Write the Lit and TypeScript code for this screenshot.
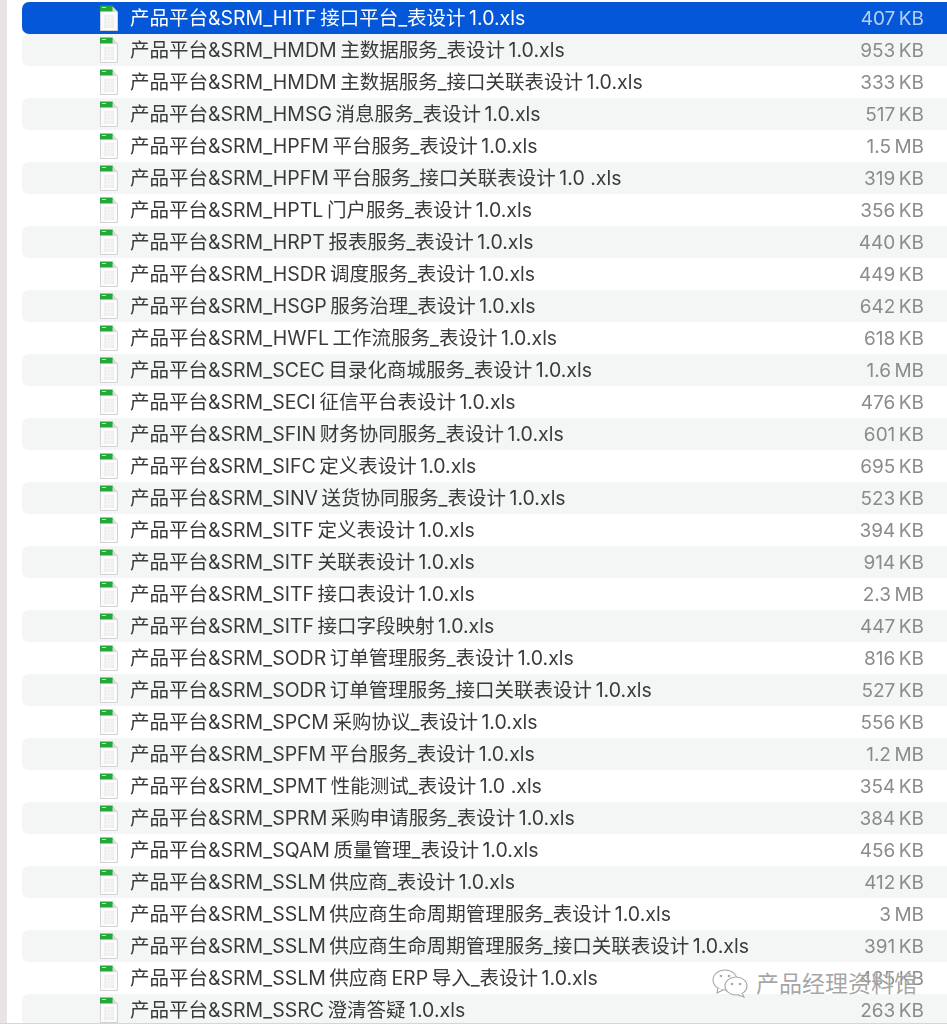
import { LitElement, html, css } from "lit";
import { customElement } from "lit/decorators.js";

const P = "产品平台&SRM_";
const rows: [string, string][] = [
  ["HITF 接口平台_表设计1.0.xls", "407 KB"],
  ["HMDM 主数据服务_表设计1.0.xls", "953 KB"],
  ["HMDM 主数据服务_接口关联表设计1.0.xls", "333 KB"],
  ["HMSG 消息服务_表设计1.0.xls", "517 KB"],
  ["HPFM 平台服务_表设计1.0.xls", "1.5 MB"],
  ["HPFM 平台服务_接口关联表设计1.0 .xls", "319 KB"],
  ["HPTL 门户服务_表设计1.0.xls", "356 KB"],
  ["HRPT 报表服务_表设计1.0.xls", "440 KB"],
  ["HSDR 调度服务_表设计1.0.xls", "449 KB"],
  ["HSGP 服务治理_表设计1.0.xls", "642 KB"],
  ["HWFL 工作流服务_表设计1.0.xls", "618 KB"],
  ["SCEC 目录化商城服务_表设计1.0.xls", "1.6 MB"],
  ["SECI 征信平台表设计1.0.xls", "476 KB"],
  ["SFIN 财务协同服务_表设计1.0.xls", "601 KB"],
  ["SIFC 定义表设计1.0.xls", "695 KB"],
  ["SINV 送货协同服务_表设计1.0.xls", "523 KB"],
  ["SITF 定义表设计1.0.xls", "394 KB"],
  ["SITF 关联表设计1.0.xls", "914 KB"],
  ["SITF 接口表设计1.0.xls", "2.3 MB"],
  ["SITF 接口字段映射1.0.xls", "447 KB"],
  ["SODR 订单管理服务_表设计1.0.xls", "816 KB"],
  ["SODR 订单管理服务_接口关联表设计1.0.xls", "527 KB"],
  ["SPCM 采购协议_表设计1.0.xls", "556 KB"],
  ["SPFM 平台服务_表设计1.0.xls", "1.2 MB"],
  ["SPMT 性能测试_表设计1.0 .xls", "354 KB"],
  ["SPRM 采购申请服务_表设计1.0.xls", "384 KB"],
  ["SQAM 质量管理_表设计1.0.xls", "456 KB"],
  ["SSLM 供应商_表设计1.0.xls", "412 KB"],
  ["SSLM 供应商生命周期管理服务_表设计1.0.xls", "3 MB"],
  ["SSLM 供应商生命周期管理服务_接口关联表设计1.0.xls", "391 KB"],
  ["SSLM 供应商 ERP 导入_表设计1.0.xls", "485 KB"],
  ["SSRC 澄清答疑1.0.xls", "263 KB"],
];

const thin = (s: string) =>
  s
    .replace(/ (?=[^.])/g, "\u2009")
    .replace(/([\u4e00-\u9fff])1\.0/, "$1\u20091.0");

const fileIcon = html`<svg class="ico" width="20" height="26" viewBox="0 0 20 26">
  <path d="M1.5 1.5H13L18.5 7V25.5H1.5Z" fill="#fbfbfb" stroke="#d2d2d2" stroke-width="1"/>
  <path d="M1 0.5H13.5L16 6.5H1Z" fill="#22a838"/>
  <path d="M3 2.5H7" stroke="#bfe8c4" stroke-width="1"/>
  <path d="M13.5 1.5L18.5 7H13.5Z" fill="#d8d8d8"/>
  <path d="M5 10H15V23H5Z" fill="#eceeec"/>
  <path d="M5 13H15M5 16H15M5 19H15M8.5 10V23M11.5 10V23" stroke="#f6f7f6" stroke-width="1" fill="none"/>
</svg>`;

@customElement("app-root")
export class AppRoot extends LitElement {
  static styles = css`
    :host {
      display: block;
      width: 947px;
      height: 1024px;
      overflow: hidden;
      background: #fff;
      position: relative;
      font-family: Inter, "Noto Sans CJK SC", sans-serif;
    }
    .page {
      display: flex;
      height: 1023px;
      overflow: hidden;
      border-bottom: 1px solid #d9d5d6;
      filter: blur(0.35px);
    }
    .edge { width: 7px; flex: none; background: #e8e4e6; }
    .list { flex: 1; padding: 2px 0 0 15px; min-width: 0; }
    .row {
      height: 32px;
      display: flex;
      align-items: center;
      border-radius: 7px 0 0 7px;
      color: #3a3a3a;
      font-size: 19.5px;
      padding-left: 77px;
    }
    .row.even { background: #f4f5f5; }
    .row.sel { background: #0357d8; color: #fff; }
    .ico { flex: none; margin-right: 11px; }
    .name { flex: 1; white-space: nowrap; padding-bottom: 4px; }
    .size {
      width: 87px;
      margin-right: 23px;
      text-align: right;
      font-size: 19px;
      color: #8b8b8b;
      white-space: nowrap;
    }
    .sel .size { color: #b9cff2; }
    .mark {
      position: absolute;
      left: 711px;
      top: 965px;
      display: flex;
      align-items: center;
      gap: 7px;
      font-size: 23px;
      color: rgba(125, 125, 125, 0.7);
      text-shadow: 0 0 2px #fff;
    }
    .mark span { padding-bottom: 2px; }
  `;
  render() {
    return html`<div class="page">
        <div class="edge"></div>
        <div class="list">
          ${rows.map(
            ([n, s], i) => html`<div class="row ${i === 0 ? "sel" : i % 2 ? "even" : ""}">
              ${fileIcon}<span class="name">${P}${thin(n)}</span><span class="size">${s.replace(" ", "\u2009")}</span>
            </div>`
          )}
        </div>
      </div>
      <div class="mark">
        <svg width="38" height="32" viewBox="0 0 38 30" fill="#fff" stroke="#a8a8a8" stroke-width="1.1">
          <ellipse cx="14" cy="12" rx="12" ry="10"/>
          <path d="M7 20L6 25L12 22"/>
          <ellipse cx="25" cy="18" rx="11" ry="9"/>
          <path d="M31 25L33 29L27 27"/>
          <circle cx="10" cy="8" r=".8"/><circle cx="18" cy="8" r=".8"/>
          <circle cx="21" cy="16" r=".8"/><circle cx="29" cy="16" r=".8"/>
        </svg>
        <span>产品经理资料馆</span>
      </div>`;
  }
}
